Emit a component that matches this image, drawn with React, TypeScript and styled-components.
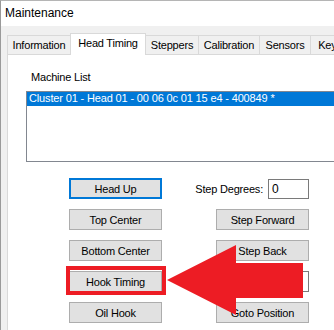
import React from "react";
import styled, { createGlobalStyle } from "styled-components";

const Global = createGlobalStyle`
    html, body {
        margin: 0;
        padding: 0;
        background: #fff;
    }
    * {
        box-sizing: border-box;
    }
`;

const Screen = styled.div`
    position: relative;
    width: 334px;
    height: 330px;
    overflow: hidden;
    font-family: "Liberation Sans", Arial, sans-serif;
    font-size: 11px;
    letter-spacing: -0.2px;
    color: #000;
`;
const Window = styled.div`
    display: flex;
    flex-direction: column;
    width: 100%;
    height: 100%;
    border-left: 1px solid #9a9a9a;
    border-top: 1px solid #b5b5b5;
`;
const TitleBar = styled.div`
    height: 25px;
    flex: none;
    display: flex;
    align-items: center;
    padding: 0 0 1px 4px;
    background: #fff;
    font-size: 12px;
    letter-spacing: 0;
`;
const Body = styled.div`
    flex: 1;
    display: flex;
    flex-direction: column;
    background: #f0f0f0;
    padding: 7px 0 0 6px;
`;
const TabStrip = styled.div`
    display: flex;
    align-items: flex-end;
    height: 21px;
    padding-left: 1px;
    position: relative;
    z-index: 1;
`;
const Tab = styled.div<{ $active?: boolean; $w: number }>`
    flex: none;
    width: ${(p) => p.$w}px;
    height: ${(p) => (p.$active ? 22 : 19)}px;
    margin-bottom: ${(p) => (p.$active ? -1 : 0)}px;
    display: flex;
    justify-content: center;
    align-items: center;
    padding-bottom: ${(p) => (p.$active ? 4 : 0)}px;
    background: ${(p) => (p.$active ? "#fff" : "#f0f0f0")};
    border: 1px solid #d9d9d9;
    border-bottom: none;
    margin-left: -1px;
    white-space: nowrap;
`;
const TabPage = styled.div`
    flex: 1;
    background: #fff;
    border-left: 1px solid #d9d9d9;
    border-top: 1px solid #d9d9d9;
    padding: 15px 0 0 18px;
`;
const Label = styled.div`
    height: 14px;
    line-height: 14px;
    padding-left: 5px;
    margin-bottom: 7px;
`;
const ListBox = styled.div`
    width: 330px;
    height: 71px;
    border: 1px solid #828790;
    background: #fff;
`;
const ListRow = styled.div<{ $selected?: boolean }>`
    height: 14px;
    line-height: 13px;
    padding-left: 2px;
    white-space: nowrap;
    letter-spacing: -0.15px;
    background: ${(p) => (p.$selected ? "#0078d7" : "transparent")};
    color: ${(p) => (p.$selected ? "#fff" : "#000")};
`;
const Controls = styled.div`
    display: grid;
    grid-template-columns: 93px 93px;
    grid-auto-rows: 21px;
    column-gap: 54px;
    row-gap: 10px;
    margin: 16px 0 0 43px;
`;
const Cell = styled.div<{ $col: number }>`
    position: relative;
    grid-column: ${(p) => p.$col};
    display: flex;
`;
const Button = styled.div<{ $focused?: boolean }>`
    flex: 1;
    display: flex;
    align-items: center;
    justify-content: center;
    background: #e1e1e1;
    border: ${(p) => (p.$focused ? "2px solid #0078d7" : "1px solid #adadad")};
    white-space: nowrap;
`;
const FieldRow = styled.div`
    display: flex;
    align-items: center;
    justify-content: flex-end;
    gap: 5px;
    width: 120px;
    margin-left: -27px;
    white-space: nowrap;
`;
const TextBox = styled.div<{ $w?: number }>`
    width: ${(p) => (p.$w ? `${p.$w}px` : "100%")};
    height: ${(p) => (p.$w ? 20 : 21)}px;
    border: 1px solid #7a7a7a;
    background: #fff;
    padding: 2px 3px;
    font-size: 12px;
    line-height: 15px;
`;
const Highlight = styled.div`
    position: absolute;
    left: -3px;
    top: -5px;
    width: 100px;
    height: 29px;
    border: 4px solid #ed1c24;
    pointer-events: none;
`;
const Arrow = styled.svg`
    position: absolute;
    left: 0;
    top: 0;
    pointer-events: none;
`;

const tabs = [
    { name: "Information", w: 64 },
    { name: "Head Timing", w: 76, active: true },
    { name: "Steppers", w: 54 },
    { name: "Calibration", w: 62 },
    { name: "Sensors", w: 52 },
    { name: "Keys", w: 40 },
];

export default function App() {
    return (
        <Screen>
            <Global />
            <Window>
                <TitleBar>Maintenance</TitleBar>
                <Body>
                    <TabStrip>
                        {tabs.map((t) => (
                            <Tab key={t.name} $w={t.w} $active={t.active}>
                                {t.name}
                            </Tab>
                        ))}
                    </TabStrip>
                    <TabPage>
                        <Label>Machine List</Label>
                        <ListBox>
                            <ListRow $selected>
                                Cluster 01 - Head 01 - 00 06 0c 01 15 e4 - 400849 *
                            </ListRow>
                        </ListBox>
                        <Controls>
                            <Cell $col={1}>
                                <Button $focused>Head Up</Button>
                            </Cell>
                            <Cell $col={2}>
                                <FieldRow>
                                    Step Degrees:
                                    <TextBox $w={41}>0</TextBox>
                                </FieldRow>
                            </Cell>
                            <Cell $col={1}>
                                <Button>Top Center</Button>
                            </Cell>
                            <Cell $col={2}>
                                <Button>Step Forward</Button>
                            </Cell>
                            <Cell $col={1}>
                                <Button>Bottom Center</Button>
                            </Cell>
                            <Cell $col={2}>
                                <Button>Step Back</Button>
                            </Cell>
                            <Cell $col={1}>
                                <Button>Hook Timing</Button>
                                <Highlight />
                            </Cell>
                            <Cell $col={2}>
                                <TextBox />
                            </Cell>
                            <Cell $col={1}>
                                <Button>Oil Hook</Button>
                            </Cell>
                            <Cell $col={2}>
                                <Button>Goto Position</Button>
                            </Cell>
                        </Controls>
                    </TabPage>
                </Body>
            </Window>
            <Arrow width="334" height="330" viewBox="0 0 334 330">
                <polygon
                    points="167,280 236,245 236,263 303,263 303,298 236,298 236,315"
                    fill="#ed1c24"
                />
            </Arrow>
        </Screen>
    );
}
